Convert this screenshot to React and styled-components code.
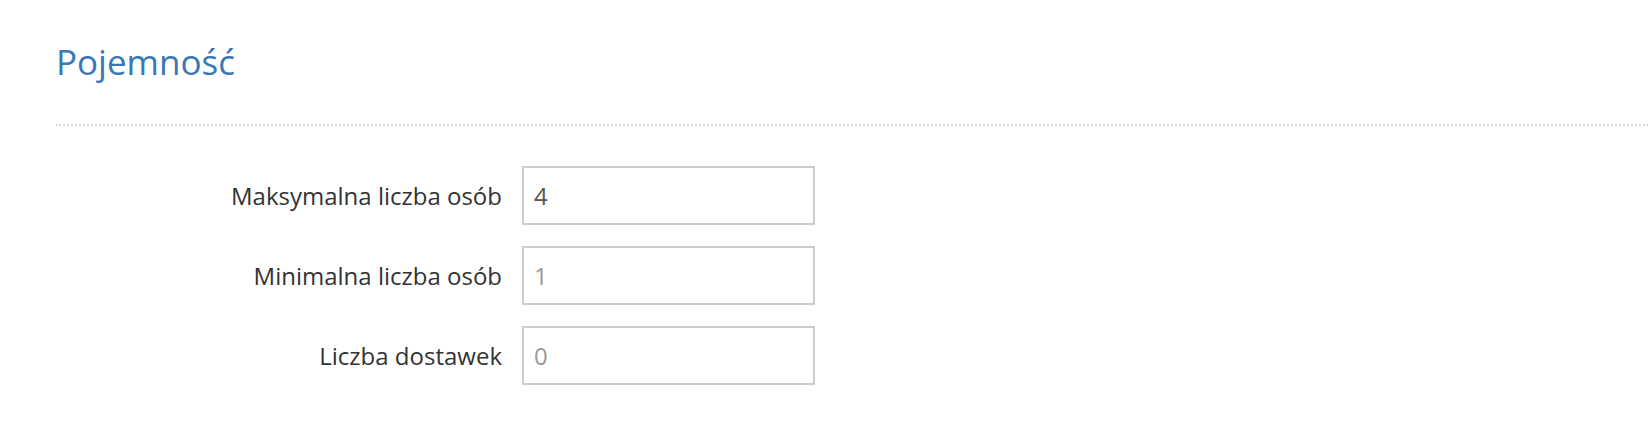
import React from "react";
import styled, { createGlobalStyle } from "styled-components";

const GlobalStyle = createGlobalStyle`
  html, body {
    margin: 0;
    padding: 0;
    background: #fff;
  }
  body {
    font-family: "Open Sans", "Liberation Sans", sans-serif;
    color: #333;
  }
`;

const fields = [
  { id: "max", label: "Maksymalna liczba osób", value: "4" },
  { id: "min", label: "Minimalna liczba osób", placeholder: "1" },
  { id: "extra", label: "Liczba dostawek", placeholder: "0" },
];

const App = () => {
  return (
    <Wrapper>
      <GlobalStyle />
      <Title>Pojemność</Title>
      <Divider />
      <Form>
        {fields.map((f) => (
          <Row key={f.id}>
            <Label htmlFor={f.id}>{f.label}</Label>
            <Input
              id={f.id}
              type="text"
              defaultValue={f.value}
              placeholder={f.placeholder}
            />
          </Row>
        ))}
      </Form>
    </Wrapper>
  );
};

const Wrapper = styled.section`
  padding: 0 0 0 56px;
`;

const Title = styled.h2`
  margin: 0;
  padding-top: 37px;
  font-size: 35px;
  font-weight: 400;
  line-height: 50px;
  color: #3a78b5;
`;

const Divider = styled.hr`
  margin: 37px 0 0 0;
  border: none;
  border-top: 2px dotted #dadada;
  height: 0;
`;

const Form = styled.div`
  display: flex;
  flex-direction: column;
  gap: 21px;
  padding-top: 40px;
`;

const Row = styled.div`
  display: grid;
  grid-template-columns: 446px 293px;
  column-gap: 20px;
  align-items: center;
`;

const Label = styled.label`
  text-align: right;
  font-size: 24px;
  color: #333;
`;

const Input = styled.input`
  box-sizing: border-box;
  width: 293px;
  height: 59px;
  padding: 0 10px;
  border: 2px solid #cccccc;
  border-radius: 0;
  font-family: "Open Sans", "Liberation Sans", sans-serif;
  font-size: 24px;
  color: #555;
  outline: none;
  &::placeholder {
    color: #999;
  }
`;

export default App;
